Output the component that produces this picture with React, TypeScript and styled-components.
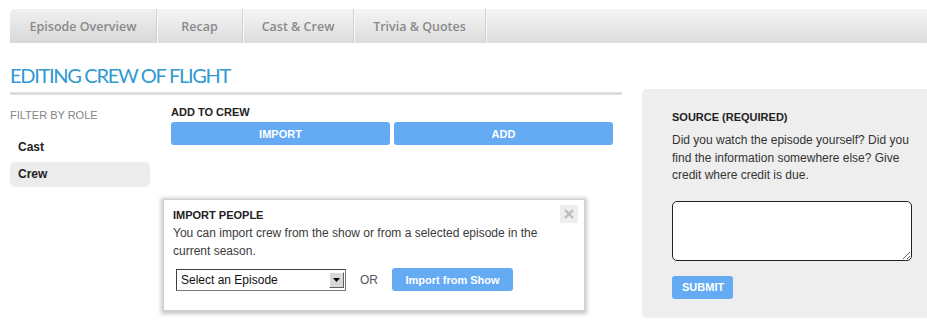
import styled, { createGlobalStyle } from "styled-components"

const GlobalStyle = createGlobalStyle`
  html, body {
    margin: 0;
    padding: 0;
    overflow: hidden;
    background: #ffffff;
  }
  body {
    font-family: "Liberation Sans", Arial, sans-serif;
    font-size: 12px;
    color: #333333;
  }
`

const PageContainer = styled.div`
  box-sizing: border-box;
  width: 100%;
  padding: 9px 0 0 10px;
`

const TabBar = styled.nav`
  display: flex;
  height: 34px;
  border-radius: 5px 0 0 0;
  background: linear-gradient(#f5f5f5, #dcdcdc);
`

const Tab = styled.div<{ $width: number; $active?: boolean }>`
  display: flex;
  align-items: center;
  justify-content: center;
  box-sizing: border-box;
  width: ${({ $width }) => $width}px;
  height: 100%;
  font-family: "Open Sans", sans-serif;
  font-size: 12.5px;
  font-weight: 600;
  color: #8a8a8a;
  border-right: 1px solid #d2d2d2;
  box-shadow: 1px 0 0 #f8f8f8;
  border-radius: ${({ $active }) => ($active ? "5px 0 0 0" : "0")};
  background: ${({ $active }) =>
    $active ? "linear-gradient(#f0f0f0, #d8d8d8)" : "transparent"};
`

const ContentRow = styled.div`
  display: flex;
  align-items: flex-start;
`

const LeftColumn = styled.div`
  position: relative;
  flex-shrink: 0;
  width: 612px;
  height: 280px;
`

const Title = styled.h1`
  margin: 20px 0 0 0;
  height: 24px;
  line-height: 24px;
  font-family: Lato, sans-serif;
  font-weight: 400;
  font-size: 20px;
  letter-spacing: -1.3px;
  color: #3099cf;
`

const Rule = styled.div`
  margin-top: 5px;
  height: 3px;
  background: #dddddd;
`

const EditRow = styled.div`
  display: flex;
  margin-top: 10px;
`

const Sidebar = styled.aside`
  display: flex;
  flex-direction: column;
  gap: 2px;
  width: 140px;
`

const SidebarTitle = styled.div`
  margin: 3px 0 11px 0;
  line-height: 14px;
  font-size: 11px;
  color: #858585;
`

const RoleItem = styled.div<{ $selected?: boolean }>`
  height: 25px;
  line-height: 25px;
  padding-left: 8px;
  border-radius: 5px;
  font-size: 12px;
  font-weight: 700;
  color: #222222;
  background: ${({ $selected }) => ($selected ? "#ececec" : "transparent")};
`

const CrewPanel = styled.section`
  margin-left: 21px;
  width: 442px;
`

const Label = styled.div`
  line-height: 14px;
  font-size: 11px;
  font-weight: 700;
  color: #222222;
`

const ButtonRow = styled.div`
  display: flex;
  gap: 4px;
  margin-top: 3px;
`

const BlueButton = styled.button<{ $width?: number }>`
  box-sizing: border-box;
  width: ${({ $width }) => ($width ? `${$width}px` : "auto")};
  height: 23px;
  padding: 0 10px;
  border: none;
  border-radius: 3px;
  background: #64abf4;
  color: #ffffff;
  font-family: "Liberation Sans", Arial, sans-serif;
  font-size: 11px;
  font-weight: 700;
  cursor: pointer;
`

const Modal = styled.div`
  position: absolute;
  left: 153px;
  top: 156px;
  box-sizing: border-box;
  width: 422px;
  height: 112px;
  padding: 8px 9px;
  background: #ffffff;
  border: 1px solid #d0d0d0;
  box-shadow: 0 1px 4px 2px rgba(0, 0, 0, 0.22);
`

const ModalTitle = styled.div`
  line-height: 14px;
  font-size: 11px;
  font-weight: 700;
  color: #222222;
`

const ModalText = styled.p`
  margin: 2px 0 0 0;
  line-height: 18px;
  font-size: 12px;
  color: #3a3a3a;
`

const CloseButton = styled.div`
  position: absolute;
  right: 6px;
  top: 5px;
  display: flex;
  align-items: center;
  justify-content: center;
  width: 18px;
  height: 18px;
  background: #eeeeee;
`

const ImportRow = styled.div`
  display: flex;
  align-items: center;
  margin-top: 8px;
  padding-left: 3px;
`

const SelectBox = styled.div`
  display: flex;
  align-items: center;
  box-sizing: border-box;
  width: 170px;
  height: 22px;
  padding: 0 1px 0 4px;
  border: 1px solid #7a7a7a;
  border-top-color: #404040;
  border-left-color: #404040;
  font-size: 12px;
  color: #111111;
`

const SelectText = styled.span`
  flex: 1;
`

const SelectArrow = styled.span`
  display: flex;
  align-items: center;
  justify-content: center;
  width: 15px;
  height: 16px;
  box-sizing: border-box;
  background: #d8d8d8;
  border: 1px solid #ffffff;
  border-right-color: #606060;
  border-bottom-color: #606060;
`

const OrText = styled.span`
  margin: 0 14px 0 14px;
  font-size: 12px;
  color: #555555;
`

const SourcePanel = styled.section`
  box-sizing: border-box;
  flex-shrink: 0;
  width: 285px;
  height: 229px;
  margin: 46px 0 0 20px;
  padding: 21px 0 0 30px;
  background: #eeeeee;
  border-radius: 5px 0 0 5px;
`

const SourceText = styled.p`
  margin: 8px 0 0 0;
  width: 240px;
  line-height: 17.5px;
  font-size: 12px;
  color: #333333;
`

const SourceInput = styled.textarea`
  display: block;
  box-sizing: border-box;
  width: 240px;
  height: 60px;
  margin: 16px 0 15px 0;
  border: 1px solid #222222;
  border-radius: 5px;
  background: #ffffff;
  resize: vertical;
`

export default function App() {
  return (
    <PageContainer>
      <GlobalStyle />
      <TabBar>
        <Tab $width={147} $active>Episode Overview</Tab>
        <Tab $width={86}>Recap</Tab>
        <Tab $width={111}>Cast &amp; Crew</Tab>
        <Tab $width={132}>Trivia &amp; Quotes</Tab>
      </TabBar>
      {/* tabs */}

      <ContentRow>
        <LeftColumn>
          <Title>EDITING CREW OF FLIGHT</Title>
          <Rule />

          <EditRow>
            <Sidebar>
              <SidebarTitle>FILTER BY ROLE</SidebarTitle>
              <RoleItem>Cast</RoleItem>
              <RoleItem $selected>Crew</RoleItem>
            </Sidebar>

            <CrewPanel>
              <Label>ADD TO CREW</Label>
              <ButtonRow>
                <BlueButton $width={219}>IMPORT</BlueButton>
                <BlueButton $width={219}>ADD</BlueButton>
              </ButtonRow>
            </CrewPanel>
          </EditRow>

          <Modal>
            <CloseButton>
              <svg width="12" height="12" viewBox="0 0 12 12">
                <path d="M2 2 L10 10 M10 2 L2 10" stroke="#bdbdbd" strokeWidth="2.4" />
              </svg>
            </CloseButton>
            <ModalTitle>IMPORT PEOPLE</ModalTitle>
            <ModalText>
              You can import crew from the show or from a selected episode in the current season.
            </ModalText>
            <ImportRow>
              <SelectBox>
                <SelectText>Select an Episode</SelectText>
                <SelectArrow>
                  <svg width="7" height="4" viewBox="0 0 7 4">
                    <path d="M0 0 H7 L3.5 4 Z" fill="#000000" />
                  </svg>
                </SelectArrow>
              </SelectBox>
              <OrText>OR</OrText>
              <BlueButton $width={121}>Import from Show</BlueButton>
            </ImportRow>
          </Modal>
          {/* import popup */}
        </LeftColumn>

        <SourcePanel>
          <Label>SOURCE (REQUIRED)</Label>
          <SourceText>
            Did you watch the episode yourself? Did you find the information somewhere else? Give
            credit where credit is due.
          </SourceText>
          <SourceInput />
          <BlueButton $width={61}>SUBMIT</BlueButton>
        </SourcePanel>
      </ContentRow>
    </PageContainer>
  )
}
